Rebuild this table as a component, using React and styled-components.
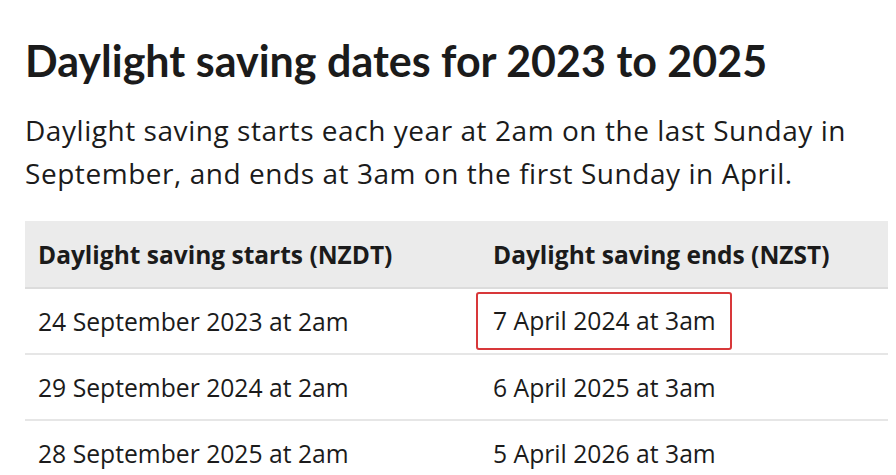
import React from 'react';
import styled, { createGlobalStyle } from 'styled-components';

const GlobalStyle = createGlobalStyle`
  html, body {
    margin: 0;
    padding: 0;
    background: #ffffff;
  }
  body {
    font-family: "Open Sans", "Noto Sans", sans-serif;
    color: #1b1b1b;
  }
`;

const Page = styled.div`
  padding: 33px 8px 0 25px;
  width: 896px;
  height: 475px;
  box-sizing: border-box;
  overflow: hidden;
`;

const Title = styled.h1`
  margin: 0;
  font-family: Lato, "Noto Sans", sans-serif;
  font-size: 43px;
  line-height: 56px;
  font-weight: 700;
`;

const Intro = styled.p`
  margin: 20px 0 0 0;
  max-width: 850px;
  font-size: 28px;
  line-height: 43px;
  letter-spacing: 0.55px;
  font-weight: 400;
`;

const Table = styled.table`
  margin-top: 26px;
  width: 863px;
  border-collapse: collapse;
`;

const HeadCell = styled.th`
  background: #ebebeb;
  text-align: left;
  font-size: 24.5px;
  font-weight: 700;
  height: 66px;
  padding: 0 13px;
  border-bottom: 2px solid #dcdcdc;
  width: ${p => p.$width || 'auto'};
`;

const Row = styled.tr`
  border-bottom: 2px solid #e6e6e6;
`;

const Cell = styled.td`
  font-size: 24.7px;
  height: 64px;
  padding: 0 13px;
`;

const Highlight = styled.span`
  display: inline-block;
  margin-left: -17px;
  padding: 11px 14px 11px 15px;
  line-height: 32px;
  border: 2px solid #d8383a;
  border-radius: 3px;
`;

const rows = [
  ['24 September 2023 at 2am', '7 April 2024 at 3am', true],
  ['29 September 2024 at 2am', '6 April 2025 at 3am', false],
  ['28 September 2025 at 2am', '5 April 2026 at 3am', false],
];

export default function App() {
  return (
    <>
      <GlobalStyle />
      <Page>
        <Title>Daylight saving dates for 2023 to 2025</Title>
        <Intro>
          Daylight saving starts each year at 2am on the last Sunday in September, and ends at 3am on the first Sunday in April.
        </Intro>
        <Table>
          <thead>
            <tr>
              <HeadCell $width="429px">Daylight saving starts (NZDT)</HeadCell>
              <HeadCell>Daylight saving ends (NZST)</HeadCell>
            </tr>
          </thead>
          <tbody>
            {rows.map(([start, end, marked]) => (
              <Row key={start}>
                <Cell>{start}</Cell>
                <Cell>{marked ? <Highlight>{end}</Highlight> : end}</Cell>
              </Row>
            ))}
          </tbody>
        </Table>
      </Page>
    </>
  );
}
